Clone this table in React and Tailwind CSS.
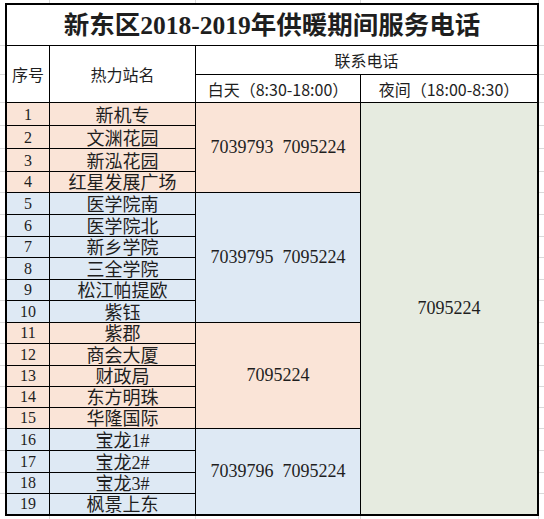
const PINK = "bg-[#fae4d7]";
const BLUE = "bg-[#dee9f4]";

const groups = [
  { bg: PINK, phone: "7039793  7095224", rowSpan: "row-span-4", names: ["新机专", "文渊花园", "新泓花园", "红星发展广场"] },
  { bg: BLUE, phone: "7039795  7095224", rowSpan: "row-span-6", names: ["医学院南", "医学院北", "新乡学院", "三全学院", "松江帕提欧", "紫钰"] },
  { bg: PINK, phone: "7095224", rowSpan: "row-span-5", names: ["紫郡", "商会大厦", "财政局", "东方明珠", "华隆国际"] },
  { bg: BLUE, phone: "7039796  7095224", rowSpan: "row-span-4", names: ["宝龙1#", "宝龙2#", "宝龙3#", "枫景上东"] },
];

// row heights shared by the table and the excel gridline strips on each side
const ROWS =
  "grid-rows-[40px_28px_27px_22px_22px_22px_20px_21px_21px_20px_21px_20px_21px_20px_21px_20px_20px_20px_21px_21px_20px_20px]";

const serif = "font-['Liberation_Serif','Noto_Sans_CJK_SC',serif]";
const sans = "font-['Noto_Sans_CJK_SC','Noto_Sans',sans-serif]";

function SideStrip() {
  const cells = Array.from({ length: 22 });
  return (
    <div className={`grid ${ROWS} w-[5px] gap-px bg-[#d9d9d9] border-y-2 border-white`}>
      {cells.map((_, i) => (
        <div key={i} className="bg-white" />
      ))}
    </div>
  );
}

function EdgeStrip() {
  return (
    <div className="grid grid-cols-[49px_145px_164px_177px_1fr] h-[3px] gap-px bg-[#d9d9d9]">
      {[0, 1, 2, 3, 4].map((i) => (
        <div key={i} className="bg-white" />
      ))}
    </div>
  );
}

function Sheet() {
  let n = 0;
  return (
    <div className={`grid grid-cols-[42px_145px_164px_176px] ${ROWS} gap-px bg-black border-2 border-black text-[#1e1e1e]`}>
      <div className={`col-span-4 bg-white flex items-center justify-center pt-[2px] ${serif} font-bold text-[25.5px] leading-none`}>
        新东区2018-2019年供暖期间服务电话
      </div>
      <div className={`row-span-2 bg-white flex items-center justify-center ${sans} text-[16px]`}>序号</div>
      <div className={`row-span-2 bg-white flex items-center justify-center ${sans} text-[16px]`}>热力站名</div>
      <div className={`col-span-2 bg-white flex items-center justify-center ${sans} text-[16px]`}>联系电话</div>
      <div className={`bg-white flex items-center justify-center ${sans} text-[16px]`}>白天（8:30-18:00）</div>
      <div className={`bg-white flex items-center justify-center ${sans} text-[16px]`}>夜间（18:00-8:30）</div>

      {groups.map((g, gi) =>
        g.names.map((name, i) => {
          n += 1;
          return [
            <div key={`n${n}`} className={`${g.bg} flex items-end justify-center pb-[2px] ${serif} text-[16px] leading-none`}>
              {n}
            </div>,
            <div key={`s${n}`} className={`${g.bg} flex items-end justify-center ${serif} text-[18px] leading-none`}>
              {name}
            </div>,
            i === 0 && (
              <div key={`p${gi}`} className={`${g.rowSpan} ${g.bg} flex items-center justify-center ${serif} text-[18px] whitespace-pre`}>
                {g.phone}
              </div>
            ),
            n === 1 && (
              <div key="night" className={`row-span-19 bg-[#e6ebe0] flex items-center justify-center ${serif} text-[18px]`}>
                7095224
              </div>
            ),
          ];
        })
      )}
    </div>
  );
}

export default function App() {
  return (
    <div className="w-[544px] h-[519px] bg-white flex flex-col overflow-hidden">
      <EdgeStrip />
      <div className="flex">
        <SideStrip />
        <Sheet />
        <SideStrip />
      </div>
      <EdgeStrip />
    </div>
  );
}
